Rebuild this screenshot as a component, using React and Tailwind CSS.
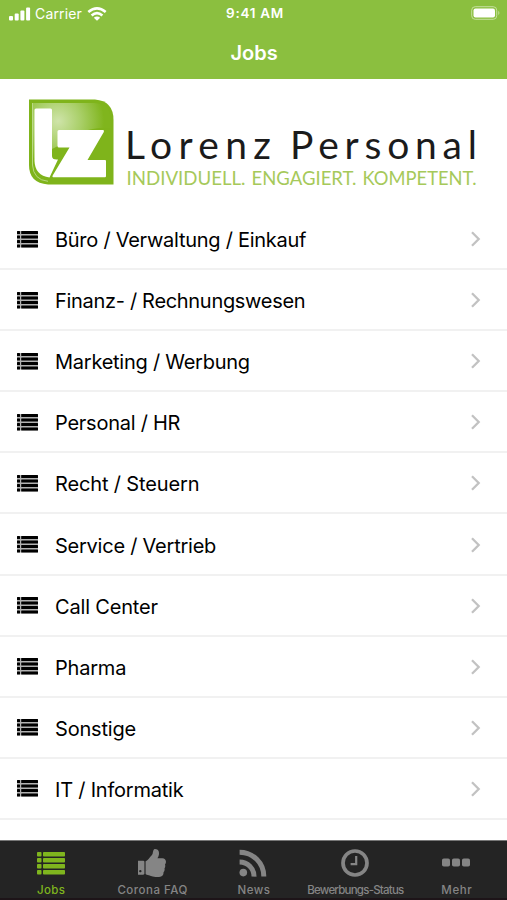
import React from "react";

const rows = [
  ["Büro / Verwaltung / Einkauf", "tracking-[-0.27px]"],
  ["Finanz- / Rechnungswesen", "tracking-[-0.31px]"],
  ["Marketing / Werbung", "tracking-[-0.25px]"],
  ["Personal / HR", "tracking-[-0.25px]"],
  ["Recht / Steuern", "tracking-[-0.14px]"],
  ["Service / Vertrieb", "tracking-[-0.24px]"],
  ["Call Center", "tracking-[-0.18px]"],
  ["Pharma", "tracking-[-0.2px]"],
  ["Sonstige", "tracking-[-0.18px]"],
  ["IT / Informatik", "tracking-[-0.22px]"],
];

function RowListIcon() {
  return (
    <svg className="mt-px h-[17px] w-[21px] shrink-0" viewBox="0 0 21 17">
      <rect x="0" y="0" width="21" height="16.5" opacity="0.3" />
      {[0, 4.5, 9, 13.5].map((y) => (
        <g key={y}>
          <rect x="0" y={y} width="3" height="3" rx="0.5" />
          <rect x="4.2" y={y} width="16.8" height="3" rx="0.5" />
        </g>
      ))}
    </svg>
  );
}

function TabListIcon() {
  return (
    <svg className="h-[23px] w-[28px]" viewBox="0 0 28 23" fill="currentColor">
      {[0, 6, 12, 18].map((y) => (
        <g key={y}>
          <rect x="0" y={y} width="4.5" height="4.6" rx="0.8" />
          <rect x="6" y={y} width="22" height="4.6" rx="0.8" />
        </g>
      ))}
    </svg>
  );
}

function ThumbIcon() {
  return (
    <svg className="h-[28px] w-[28px]" viewBox="128 128 1536 1536" fill="currentColor">
      <path d="M320 1344q0-26-19-45t-45-19q-27 0-45.5 19t-18.500 45q0 27 18.500 45.500t45.500 18.500q26 0 45-18.500t19-45.500zm160-512v640q0 26-19 45t-45 19h-288q-26 0-45-19t-19-45v-640q0-26 19-45t45-19h288q26 0 45 19t19 45zm1184 0q0 86-55 149 15 44 15 76 3 76-43 137 17 56 0 117-15 57-54 94 9 112-49 181-64 76-197 78h-129q-66 0-144-15.500t-121.500-29-120.500-39.500q-123-43-158-44-26-1-45-19.500t-19-44.500v-641q0-25 18-43.500t43-20.500q24-2 76-59t101-121q68-87 101-120 18-18 31-48t17.500-48.500 13.500-60.500q7-39 12.500-61t19.500-52 34-50q19-19 45-19 46 0 82.500 10.500t60 26 40 40.500 24 45 12 50 5 45 .5 39q0 38-9.500 76t-19 60-27.500 56q-3 6-10 18t-11 22-8 24h277q78 0 135 57t57 135z" />
    </svg>
  );
}

function RssIcon() {
  return (
    <svg className="h-[28px] w-[28px]" viewBox="0 0 28 28" fill="none" stroke="currentColor" strokeWidth="5">
      <circle cx="4.3" cy="23.6" r="3.8" fill="currentColor" stroke="none" />
      <path d="M.6 13A14.4 14.4 0 0 1 15 27.6" />
      <path d="M.6 3.2A24.2 24.2 0 0 1 24.8 27.6" />
    </svg>
  );
}

function ClockIcon() {
  return (
    <svg className="h-[28px] w-[28px]" viewBox="0 0 28 28" fill="none" stroke="currentColor">
      <circle cx="14" cy="14" r="12" strokeWidth="3.7" />
      <path d="M15.2 7V15.2H9.6" strokeWidth="2.2" />
    </svg>
  );
}

function DotsIcon() {
  return (
    <svg className="h-[28px] w-[28px]" viewBox="0 0 28 28" fill="currentColor">
      <rect x="0" y="9.500" width="8" height="8" rx="1.800" />
      <rect x="10" y="9.500" width="8" height="8" rx="1.800" />
      <rect x="20" y="9.500" width="8" height="8" rx="1.800" />
    </svg>
  );
}

const tabs = [
  [TabListIcon, "Jobs", "text-[#7fb51e]", "tracking-[0.35px]"],
  [ThumbIcon, "Corona FAQ", "text-[#858585]", "tracking-[0.5px]"],
  [RssIcon, "News", "text-[#858585]", "tracking-[0.55px]"],
  [ClockIcon, "Bewerbungs-Status", "text-[#858585]", "tracking-[-0.77px]"],
  [DotsIcon, "Mehr", "text-[#858585]", "tracking-[0.6px]"],
];

function Logo() {
  return (
    <svg className="block h-[130px] w-[507px]" viewBox="0 79 507 130">
      <defs>
        <radialGradient id="shine" gradientUnits="userSpaceOnUse" cx="58" cy="121" r="46">
          <stop offset="0" stopColor="#cfe4aa" />
          <stop offset="0.5" stopColor="#a9cf68" />
          <stop offset="1" stopColor="#80b51d" />
        </radialGradient>
      </defs>
      <path d="M29 99.500H95Q113.500 101 113.500 120V184.500H48Q29 183 29 165Z" fill="#7fb41b" />
      <path d="M32.300 103H94Q110.500 104 110.500 120V128Q82 126 58 146L32.300 159Z" fill="url(#shine)" />
      <path d="M32.500 103V165Q33.500 180 48 181.300" fill="none" stroke="#c5df9a" strokeWidth="0.800" />
      <path d="M36 108.500H50.500Q52 108.500 52 110V156Q52 159.500 56.500 159.500H58L49.500 177.500Q35 175.500 34.500 161V110Q34.500 108.500 36 108.500Z" fill="#fff" />
      <path d="M59 130H103Q104.500 130 103.800 132L87.500 160H105Q106 160 106 161V176Q106 177.300 105 177.300H53Q52 177.300 52.700 175.500L69.500 147.500H59Q57.500 147.500 57.500 146V131.500Q57.500 130 59 130Z" fill="#fff" />
      <g fontFamily="Lato, sans-serif" fill="#1b1b1b">
        <text x="125" y="159" fontSize="39" textLength="146" lengthAdjust="spacing">Lorenz</text>
        <text x="290" y="159" fontSize="39" textLength="187" lengthAdjust="spacing">Personal</text>
      </g>
      <g fontFamily="Lato, sans-serif" fontSize="18.500" fill="#a6c95a">
        <text x="126.500" y="184.500" textLength="119" lengthAdjust="spacingAndGlyphs">INDIVIDUELL.</text>
        <text x="251.500" y="184.500" textLength="105" lengthAdjust="spacingAndGlyphs">ENGAGIERT.</text>
        <text x="362.500" y="184.500" textLength="114" lengthAdjust="spacingAndGlyphs">KOMPETENT.</text>
      </g>
    </svg>
  );
}

export default function App() {
  return (
    <div className="flex h-[900px] w-[507px] flex-col overflow-hidden bg-white font-[Inter,sans-serif] text-black">
      <header className="h-[79px] shrink-0 bg-[#8bbf3f] text-white">
        <div className="grid h-[27px] grid-cols-3 items-center pl-[9px] pr-[6px]">
          <div className="flex items-center">
            <svg className="h-[14px] w-[22px]" viewBox="0 0 22 14" fill="white">
              <rect x="0" y="9" width="4" height="4.500" rx="1" />
              <rect x="5.700" y="6.500" width="4" height="7" rx="1" />
              <rect x="11.400" y="3.500" width="4" height="10" rx="1" />
              <rect x="17.100" y="0.500" width="4" height="13" rx="1" />
            </svg>
            <span className="ml-[4px] text-[14px] leading-none tracking-[0.15px]">Carrier</span>
            <svg className="ml-[5px] h-[14px] w-[20px]" viewBox="0 0 20 14" fill="none" stroke="white" strokeWidth="2.600">
              <path d="M1.300 5Q10-2.200 18.700 5" />
              <path d="M4.600 8.500Q10 3.800 15.400 8.500" />
              <path d="M10 13.800L6.800 10.700Q10 8.300 13.200 10.700Z" fill="white" stroke="none" />
            </svg>
          </div>
          <div className="pt-px text-center text-[13.500px] font-semibold leading-none tracking-[0.7px]">9:41 AM</div>
          <svg className="mb-px h-[14px] w-[30px] justify-self-end" viewBox="0 0 30 14">
            <rect x="0.700" y="0.700" width="25" height="12.600" rx="3.500" fill="none" stroke="#c5df9e" strokeWidth="1" />
            <rect x="2.500" y="2.500" width="21.500" height="9" rx="2" fill="white" />
            <path d="M27.300 4.800Q29.500 7 27.300 9.200Z" fill="#c5df9e" />
          </svg>
        </div>
        <h1 className="pl-px pt-[14px] text-center text-[20px] font-semibold leading-[24px]">Jobs</h1>
      </header>

      <main className="flex min-h-0 flex-1 flex-col overflow-hidden">
        <div className="shrink-0"><Logo /></div>
        {rows.map(([label, tracking]) => (
          <div key={label} className="flex h-[61.1px] shrink-0 items-center border-b-2 border-[#f1f1f1] pl-[17px] pr-[26px]">
            <RowListIcon />
            <span className={`ml-[17px] mt-[3px] flex-1 whitespace-nowrap text-[20px] leading-[28px] ${tracking}`}>{label}</span>
            <svg className="mt-px h-[16px] w-[11px]" viewBox="0 0 11 16" fill="none" stroke="#c2c2c2" strokeWidth="2.300">
              <path d="M2 1.300L8.700 8L2 14.700" />
            </svg>
          </div>
        ))}
      </main>

      <nav className="grid h-[60px] shrink-0 grid-cols-5 border-b-2 border-t border-b-[#1d1418] border-t-[#777] bg-[#242424]">
        {tabs.map(([Icon, label, color, tracking]) => (
          <div key={label} className={`flex flex-col items-center ${color}`}>
            <div className="mt-[7px] flex h-[30px] items-center justify-center"><Icon /></div>
            <span className={`mt-[5px] whitespace-nowrap pl-px text-[11.500px] font-medium leading-[15px] ${tracking}`}>{label}</span>
          </div>
        ))}
      </nav>
    </div>
  );
}
